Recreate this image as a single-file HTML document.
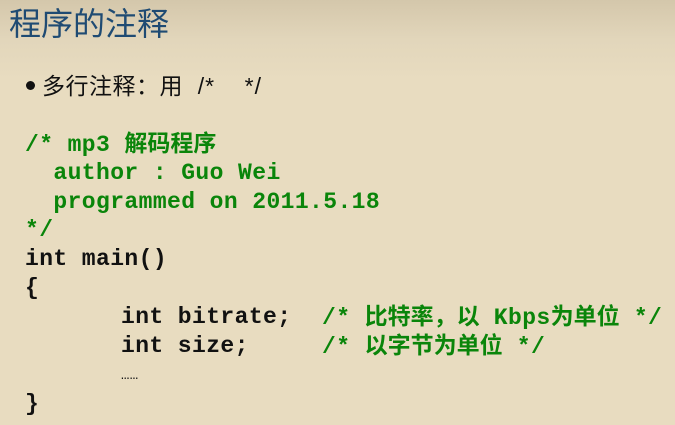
<!DOCTYPE html>
<html><head><meta charset="utf-8"><style>
html,body{margin:0;padding:0}
body{width:675px;height:425px;overflow:hidden;position:relative;background:linear-gradient(#d4c7ab 0px,#e2d6bb 40px,#e8dcc0 80px,#e8dcc0 425px);font-family:"Liberation Sans","Noto Sans CJK SC",sans-serif}
.t{position:absolute;left:9px;top:3px;font-size:32px;color:#1f4b73;line-height:42px}
.dot{position:absolute;left:26px;top:81px;width:9px;height:9px;border-radius:50%;background:#111}
.b{position:absolute;left:42px;top:68px;font-size:23px;color:#111;line-height:32px;white-space:pre;font-family:"Noto Sans CJK SC",sans-serif;letter-spacing:0.5px}
.b i{font-style:normal;font-family:"Liberation Sans",sans-serif;letter-spacing:1px}
.c{position:absolute;font-family:"Liberation Mono",monospace;font-weight:bold;font-size:23px;letter-spacing:0.4px;line-height:29px;height:29px;white-space:pre;color:#111}
.g{color:#0a850a}
.cj{font-family:"Noto Sans CJK SC",sans-serif;font-weight:bold;font-size:23px;letter-spacing:0;line-height:1}
</style></head><body>
<div class="t">程序的注释</div>
<div class="dot"></div>
<div class="b">多行注释：用<i>  /*    */</i></div>
<div class="c g" style="left:25px;top:130px">/* mp3 <span class="cj">解码程序</span></div>
<div class="c g" style="left:25px;top:159px">  author : Guo Wei</div>
<div class="c g" style="left:25px;top:188px">  programmed on 2011.5.18</div>
<div class="c g" style="left:25px;top:216px">*/</div>
<div class="c" style="left:25px;top:245px">int main()</div>
<div class="c" style="left:25px;top:274px">{</div>
<div class="c" style="left:121px;top:303px">int bitrate;</div>
<div class="c g" style="left:322px;top:303px">/* <span class="cj">比特率，以</span> Kbps<span class="cj">为单位</span> */</div>
<div class="c" style="left:121px;top:332px">int size;</div>
<div class="c g" style="left:322px;top:332px">/* <span class="cj">以字节为单位</span> */</div>
<div class="c" style="left:121px;top:362px;font-weight:normal;font-size:14px">……</div>
<div class="c" style="left:25px;top:390px">}</div>
</body></html>
